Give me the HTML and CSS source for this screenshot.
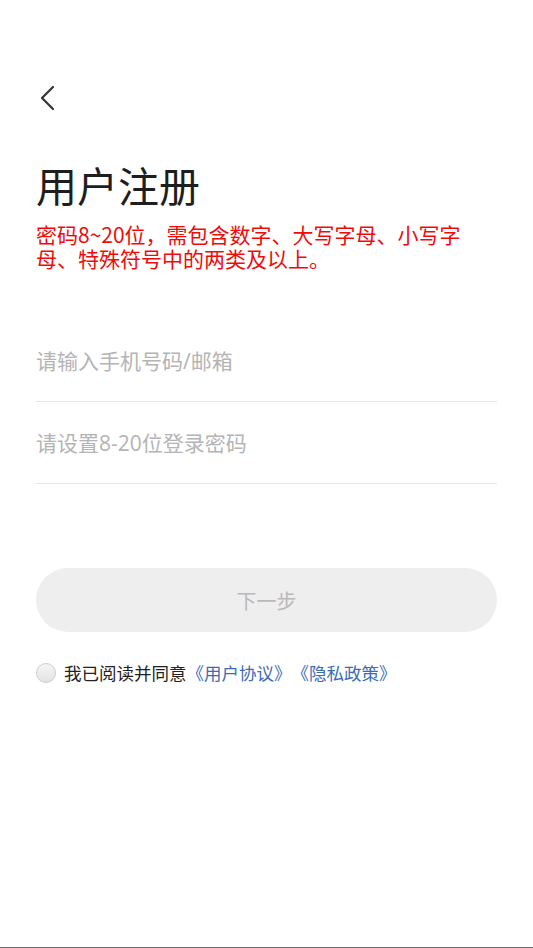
FILE: index.html
```html
<!DOCTYPE html>
<html lang="zh-CN">
<head>
<meta charset="utf-8">
<title>用户注册</title>
<link rel="stylesheet" href="styles.css">
</head>
<body>
<div class="page">
  <div class="back" aria-label="返回">
    <svg width="20" height="30" viewBox="0 0 20 30"><path d="M17 4 L6 15 L17 26" fill="none" stroke="#333" stroke-width="2.2" stroke-linecap="round" stroke-linejoin="round"/></svg>
  </div>
  <h1 class="title">用户注册</h1>
  <p class="hint">密码8~20位，需包含数字、大写字母、小写字母、特殊符号中的两类及以上。</p>
  <div class="field"><input type="text" placeholder="请输入手机号码/邮箱"></div>
  <div class="field"><input type="password" placeholder="请设置8-20位登录密码"></div>
  <button class="next" type="button">下一步</button>
  <div class="agree">
    <span class="radio"></span>
    <span class="agree-text">我已阅读并同意<a class="link">《用户协议》</a><a class="link">《隐私政策》</a></span>
  </div>
</div>
</body>
</html>
```

FILE: styles.css
```css
* { box-sizing: border-box; }
html, body { margin: 0; padding: 0; background: #fff; }
body {
  font-family: "Noto Sans CJK SC", "Noto Sans", Roboto, sans-serif;
  color: #222;
  text-spacing-trim: space-all;
}
.page {
  height: 948px;
  padding: 0 36px;
  border-bottom: 1px solid #6b6b6b;
  display: flex;
  flex-direction: column;
}
.back {
  margin-top: 83px;
  height: 30px;
  display: flex;
}
.back svg { display: block; }
.title {
  margin: 47px 0 0;
  font-size: 41px;
  line-height: 48px;
  font-weight: 400;
  color: #1e1e1e;
}
.hint {
  margin: 14px 0 0;
  max-width: 430px;
  font-size: 21px;
  line-height: 24px;
  color: #f00a0a;
}
.field {
  padding: 27px 0 26px;
  border-bottom: 1px solid #e6e6e6;
}
.hint + .field { margin-top: 50px; }
.field input {
  display: block;
  width: 100%;
  height: 28px;
  border: 0;
  outline: none;
  padding: 0;
  margin: 0;
  font-family: "Open Sans", "Noto Sans CJK SC", sans-serif;
  font-size: 21px;
  color: #333;
  background: transparent;
}
.field input::placeholder { color: #b4b4b4; }
.next {
  margin-top: 84px;
  height: 64px;
  width: 100%;
  border: 0;
  border-radius: 32px;
  background: #eeeeee;
  font-family: inherit;
  font-size: 20px;
  color: #b9b9b9;
  padding: 0;
}
.agree {
  margin-top: 30px;
  display: flex;
  align-items: center;
  gap: 8px;
  height: 22px;
}
.radio {
  width: 20px;
  height: 20px;
  border-radius: 50%;
  border: 1px solid #cdcdcd;
  background: linear-gradient(#f5f5f5, #e3e3e3);
  flex: none;
}
.agree-text {
  font-size: 17.5px;
  line-height: 22px;
  color: #222;
  white-space: nowrap;
}
.link { color: #3b6cb4; text-decoration: none; }
```
